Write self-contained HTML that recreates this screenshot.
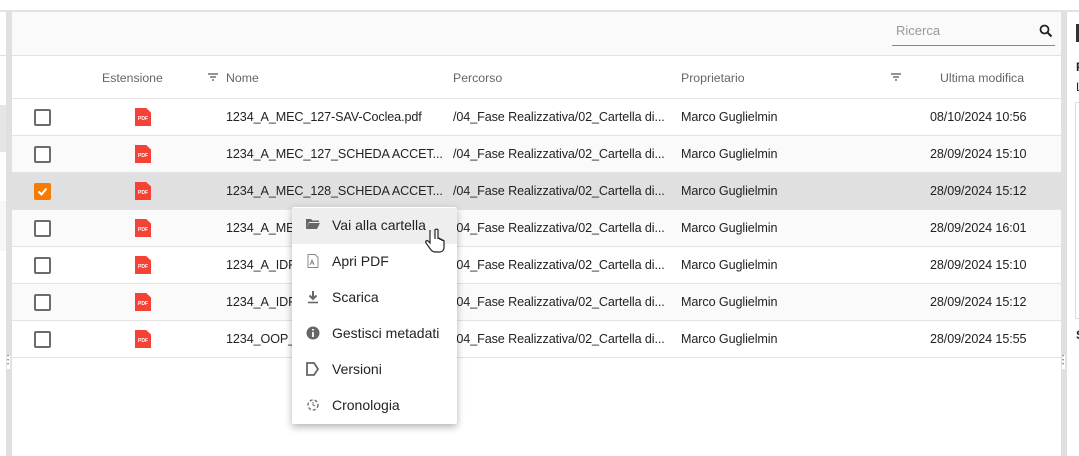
<!DOCTYPE html><html><head><style>
*{margin:0;padding:0;box-sizing:border-box}
body{width:1079px;height:456px;overflow:hidden;background:#fff;font-family:"Liberation Sans",Roboto,sans-serif;position:relative;font-size:13px;color:#222}
.a{position:absolute}
.row{position:absolute;left:12px;width:1049px;height:37px;border-bottom:1px solid #e3e3e3}
.cb{position:absolute;left:22px;top:10px;width:17px;height:17px;border:2px solid #6b6b6b;border-radius:2px;background:#fff}
.pdf{position:absolute;left:123px;top:9px;width:16px;height:18px;background:#f44336;clip-path:polygon(0 0,70% 0,100% 25%,100% 100%,0 100%);color:#fff;font-size:5px;font-weight:bold;text-align:center;line-height:22px}
.t{position:absolute;top:11px;white-space:nowrap;font-size:12.6px;letter-spacing:-0.1px;overflow:hidden}
.h{position:absolute;top:71px;color:#666;font-size:12.3px}
.mi{position:absolute;left:292px;width:165px;height:36px;font-size:14px;color:#222}
.mi span{position:absolute;left:40px;top:9px}
.mi svg{position:absolute;left:14px;top:10px}
</style></head><body>
<div class="a" style="left:0;top:10px;width:1079px;height:2px;background:#e2e2e2"></div>
<div class="a" style="left:0;top:12px;width:6px;height:444px;background:#fff"></div>
<div class="a" style="left:0;top:105px;width:6px;height:47px;background:#e6e6e6"></div>
<div class="a" style="left:0;top:55px;width:6px;height:1px;background:#ddd"></div>
<div class="a" style="left:0;top:201px;width:6px;height:50px;background:#f7f7f7"></div>
<div class="a" style="left:6px;top:12px;width:6px;height:444px;background:#e0e0e0"></div>
<div class="a" style="left:7px;top:355px;width:3px;height:14px;background:#fff;color:#789;font-size:6px;line-height:4px">•<br>•<br>•</div>
<div class="a" style="left:12px;top:12px;width:1049px;height:44px;background:#fafafa"></div>
<div class="a" style="left:12px;top:55px;width:1049px;height:44px;background:#fff;border-top:1px solid #e3e3e3;border-bottom:1px solid #e3e3e3"></div>
<div class="a" style="left:896px;top:23px;color:#999;font-size:13px">Ricerca</div>
<div class="a" style="left:892px;top:45px;width:163px;height:1px;background:#888"></div>
<svg class="a" style="left:1039px;top:24px" width="14" height="14" viewBox="0 0 14 14"><circle cx="5.5" cy="5.5" r="4" fill="none" stroke="#222" stroke-width="1.8"/><path d="M8.5 8.5L12.5 12.5" stroke="#222" stroke-width="2"/></svg>
<div class="h" style="left:102px">Estensione</div>
<svg class="a" style="left:208px;top:73px" width="10" height="8"><path d="M0 1h10M2 4h6M4 7h2" stroke="#555" stroke-width="1.3"/></svg>
<div class="h" style="left:226px">Nome</div>
<div class="h" style="left:453px">Percorso</div>
<div class="h" style="left:681px">Proprietario</div>
<svg class="a" style="left:891px;top:73px" width="10" height="8"><path d="M0 1h10M2 4h6M4 7h2" stroke="#555" stroke-width="1.3"/></svg>
<div class="h" style="left:940px">Ultima modifica</div>

<div class="row" style="top:99px;background:#fff"><div class="cb"></div><div class="pdf">PDF</div><div class="t" style="left:214px">1234_A_MEC_127-SAV-Coclea.pdf</div><div class="t" style="left:441px">/04_Fase Realizzativa/02_Cartella di...</div><div class="t" style="left:669px">Marco Guglielmin</div><div class="t" style="left:918px">08/10/2024 10:56</div></div>
<div class="row" style="top:136px;background:#fafafa"><div class="cb"></div><div class="pdf">PDF</div><div class="t" style="left:214px">1234_A_MEC_127_SCHEDA ACCET...</div><div class="t" style="left:441px">/04_Fase Realizzativa/02_Cartella di...</div><div class="t" style="left:669px">Marco Guglielmin</div><div class="t" style="left:918px">28/09/2024 15:10</div></div>
<div class="row" style="top:173px;background:#e0e0e0"><div class="cb" style="background:#f57c00;border-color:#f57c00"><svg width="13" height="13" style="position:absolute;left:0;top:0"><path d="M2.5 6.5l3 3 5-6" stroke="#fff" stroke-width="2" fill="none"/></svg></div><div class="pdf">PDF</div><div class="t" style="left:214px">1234_A_MEC_128_SCHEDA ACCET...</div><div class="t" style="left:441px">/04_Fase Realizzativa/02_Cartella di...</div><div class="t" style="left:669px">Marco Guglielmin</div><div class="t" style="left:918px">28/09/2024 15:12</div></div>
<div class="row" style="top:210px;background:#fafafa"><div class="cb"></div><div class="pdf">PDF</div><div class="t" style="left:214px">1234_A_MEC</div><div class="t" style="left:441px">/04_Fase Realizzativa/02_Cartella di...</div><div class="t" style="left:669px">Marco Guglielmin</div><div class="t" style="left:918px">28/09/2024 16:01</div></div>
<div class="row" style="top:247px;background:#fff"><div class="cb"></div><div class="pdf">PDF</div><div class="t" style="left:214px">1234_A_IDF</div><div class="t" style="left:441px">/04_Fase Realizzativa/02_Cartella di...</div><div class="t" style="left:669px">Marco Guglielmin</div><div class="t" style="left:918px">28/09/2024 15:10</div></div>
<div class="row" style="top:284px;background:#fafafa"><div class="cb"></div><div class="pdf">PDF</div><div class="t" style="left:214px">1234_A_IDF</div><div class="t" style="left:441px">/04_Fase Realizzativa/02_Cartella di...</div><div class="t" style="left:669px">Marco Guglielmin</div><div class="t" style="left:918px">28/09/2024 15:12</div></div>
<div class="row" style="top:321px;background:#fff"><div class="cb"></div><div class="pdf">PDF</div><div class="t" style="left:214px">1234_OOP_</div><div class="t" style="left:441px">/04_Fase Realizzativa/02_Cartella di...</div><div class="t" style="left:669px">Marco Guglielmin</div><div class="t" style="left:918px">28/09/2024 15:55</div></div>

<div class="a" style="left:1061px;top:12px;width:6px;height:444px;background:#e0e0e0"></div>
<div class="a" style="left:1062px;top:355px;width:3px;height:14px;background:#fff;color:#789;font-size:6px;line-height:4px">•<br>•<br>•</div>
<div class="a" style="left:1076px;top:24px;width:3px;height:18px;background:#333"></div>
<div class="a" style="left:1076px;top:60px;font-weight:bold;font-size:12px">F</div>
<div class="a" style="left:1076px;top:80px;font-size:12px">L</div>
<div class="a" style="left:1075px;top:102px;width:4px;height:217px;border:1px solid #ddd;border-right:none"></div>
<div class="a" style="left:1076px;top:328px;font-weight:bold;font-size:12px">S</div>

<div class="a" style="left:292px;top:207px;width:165px;height:217px;background:#fff;box-shadow:0 3px 8px rgba(0,0,0,.3);border-radius:2px"></div>
<div class="mi" style="top:208px;background:#eee"><svg width="14" height="12"><path d="M0 1h5l1.5 1.5H13V4H3L0 11z M3 5h11l-3 6H0z" fill="#666"/></svg><span>Vai alla cartella</span></div>
<div class="mi" style="top:244px"><svg width="14" height="14"><path d="M2 .5h7l3 3v10H2z" fill="none" stroke="#888"/><path d="M4 11l2-5 2 5M5 9h3" stroke="#888" fill="none"/></svg><span>Apri PDF</span></div>
<div class="mi" style="top:280px"><svg width="14" height="14"><path d="M7 1v8M3.5 5.5L7 9l3.5-3.5" stroke="#666" stroke-width="2" fill="none"/><path d="M2 12.5h10" stroke="#666" stroke-width="1.6"/></svg><span>Scarica</span></div>
<div class="mi" style="top:316px"><svg width="14" height="14"><circle cx="7" cy="7" r="6.5" fill="#666"/><path d="M7 6v5M7 3v1.5" stroke="#fff" stroke-width="1.8"/></svg><span>Gestisci metadati</span></div>
<div class="mi" style="top:352px"><svg width="14" height="14"><path d="M1 1h7l4 6-4 6H1z" fill="none" stroke="#666" stroke-width="1.8"/></svg><span>Versioni</span></div>
<div class="mi" style="top:388px"><svg width="14" height="14"><circle cx="7" cy="7" r="5" fill="none" stroke="#777" stroke-width="1.5" stroke-dasharray="3 2"/><path d="M7 4v3l2 1" stroke="#777" fill="none"/></svg><span>Cronologia</span></div>
<svg class="a" style="left:424px;top:228px" width="22" height="26" viewBox="0 0 22 26"><path d="M6 2v13l-2-2c-1-1-3 0-2 2l5 7c1 1 2 2 4 2h5c2 0 4-2 4-4v-7c0-1-2-1-2 0v-1c0-1-2-1-2 0v-1c0-1-2-1-2 0V2c0-1-3-1-3 0v9" fill="#fff" stroke="#222" stroke-width="1.2"/></svg>
</body></html>
